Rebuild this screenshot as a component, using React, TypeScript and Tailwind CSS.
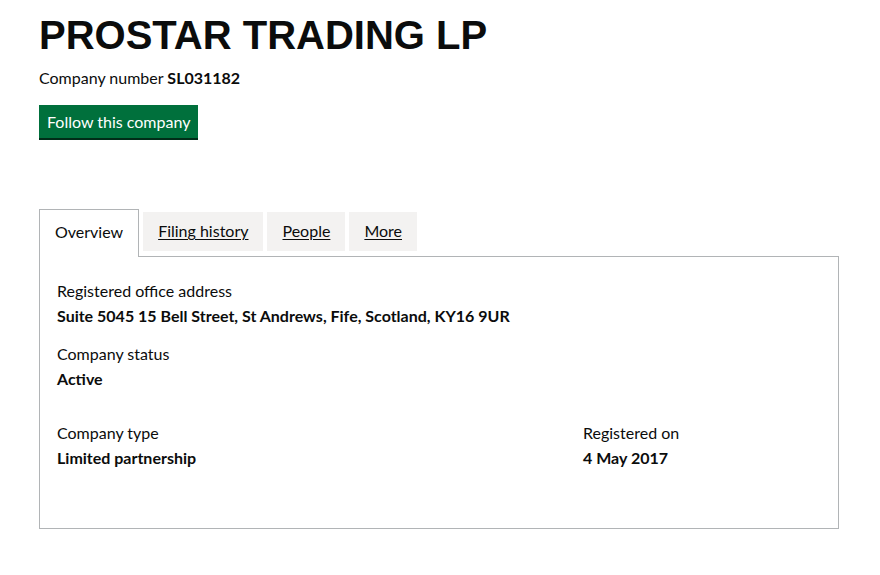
const font = { fontFamily: 'Lato, "Liberation Sans", sans-serif' }

function Field({ label, value }: { label: string; value: string }) {
  return (
    <div>
      <p className="text-[16px] leading-[25px]">{label}</p>
      <p className="text-[16px] leading-[25px] font-bold">{value}</p>
    </div>
  )
}

export default function App() {
  const tabs = ['Filing history', 'People', 'More']

  return (
    <div className="min-h-[575px] bg-white text-[#0b0c0c] px-[39px] pt-[13px]" style={font}>
      <h1 className="text-[40px] leading-[45px] font-bold font-['Liberation_Sans',Arial,sans-serif]">PROSTAR TRADING LP</h1>

      <p className="mt-[7px] text-[16px] leading-[25px]">
        Company number <strong className="font-bold">SL031182</strong>
      </p>

      <button className="mt-[15px] bg-[#00703c] text-white text-[16px] leading-[20px] px-[8px] pt-[7px] pb-[6px] shadow-[0_2px_0_#002d18]">
        Follow this company
      </button>

      <div className="mt-[71px]">
        <div className="flex items-end gap-[4px]">
          <div className="border border-b-0 border-[#b1b4b6] bg-white px-[15px] pt-[12px] pb-[15px] -mb-px relative z-10 text-[16px] leading-[20px]">
            Overview
          </div>
          {tabs.map(t => (
            <a key={t} href="#" className="bg-[#f3f2f1] px-[15px] pt-[9px] pb-[10px] mb-[5px] text-[16px] leading-[20px] underline underline-offset-2">
              {t}
            </a>
          ))}
        </div>

        <div className="w-[800px] h-[273px] border border-[#b1b4b6] px-[17px] pt-[21px]">
          <Field label="Registered office address" value="Suite 5045 15 Bell Street, St Andrews, Fife, Scotland, KY16 9UR" />
          <div className="mt-[13px]">
            <Field label="Company status" value="Active" />
          </div>
          <div className="mt-[29px] flex">
            <div className="w-[526px]">
              <Field label="Company type" value="Limited partnership" />
            </div>
            <Field label="Registered on" value="4 May 2017" />
          </div>
        </div>
      </div>
    </div>
  )
}
